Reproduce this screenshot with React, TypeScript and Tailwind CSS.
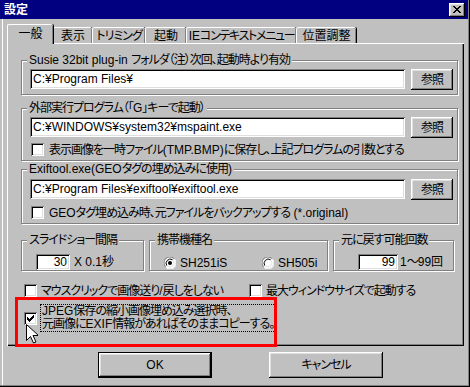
import type { ReactNode } from "react";

const raised =
  "shadow-[inset_-1px_-1px_#000,inset_1px_1px_#fff,inset_-2px_-2px_#808080,inset_2px_2px_#dfdfdf]";
const sunken =
  "shadow-[inset_1px_1px_#808080,inset_-1px_-1px_#fff,inset_2px_2px_#000,inset_-2px_-2px_#dfdfdf]";

// latin runs keep normal spacing, japanese runs get squeezed to the bitmap font's width
function T({ text }: { text: string }) {
  const parts = text.split(/([\x20-\x7e¥]+)/).filter((p) => p !== "");
  return (
    <>
      {parts.map((p, i) =>
        /^[\x20-\x7e¥]+$/.test(p) ? (
          <span key={i} className="tracking-[0px]">
            {p}
          </span>
        ) : (
          <span key={i}>{p}</span>
        )
      )}
    </>
  );
}

function Group({ label, className, children }: { label: string; className: string; children?: ReactNode }) {
  return (
    <div className={`relative border border-[#808080] shadow-[inset_1px_1px_#fff,1px_1px_#fff] ${className}`}>
      <span className="absolute left-[5px] top-[-8px] bg-[#c0c0c0] px-[2px] leading-[14px] whitespace-nowrap">
        <T text={label} />
      </span>
      {children}
    </div>
  );
}

function Field({ value, className }: { value: string; className: string }) {
  return (
    <div className={`bg-white ${sunken} px-[3px] leading-[20px] whitespace-nowrap overflow-hidden tracking-[0px] ${className}`}>
      {value}
    </div>
  );
}

function Button({ label, className }: { label: string; className: string }) {
  return (
    <div className={`flex items-center justify-center bg-[#c0c0c0] ${raised} ${className}`}>{label}</div>
  );
}

function CheckBox({ checked }: { checked?: boolean }) {
  return (
    <div className={`relative w-[13px] h-[13px] shrink-0 bg-white ${sunken}`}>
      {checked && (
        <svg className="absolute left-[3px] top-[3px]" width="7" height="7" viewBox="0 0 7 7">
          <path d="M0 2h1v1h1v1h1v-1h1v-1h1v-1h1v-1h1v3h-1v1h-1v1h-1v1h-1v1h-1v-1h-1v-1h-1z" fill="#000" />
        </svg>
      )}
    </div>
  );
}

function Radio({ checked }: { checked?: boolean }) {
  return (
    <svg width="12" height="12" viewBox="0 0 12 12" className="shrink-0">
      <circle cx="6" cy="6" r="5.5" fill="#fff" />
      <path d="M1.6 9.9A5.5 5.5 0 0 1 9.9 1.6" fill="none" stroke="#808080" strokeWidth="1" />
      <path d="M2.7 8.6A4.3 4.3 0 0 1 8.6 2.7" fill="none" stroke="#000" strokeWidth="1" />
      <path d="M10.4 2.1A5.5 5.5 0 0 1 2.1 10.4" fill="none" stroke="#fff" strokeWidth="1" />
      <path d="M9.3 3.4A4.3 4.3 0 0 1 3.4 9.3" fill="none" stroke="#dfdfdf" strokeWidth="1" />
      {checked && <circle cx="6" cy="6" r="2" fill="#000" />}
    </svg>
  );
}

function Tab({ label, selected, className }: { label: string; selected?: boolean; className: string }) {
  return (
    <div
      className={`flex items-center justify-center whitespace-nowrap bg-[#c0c0c0] rounded-t-[2px] border-l border-t border-white shadow-[inset_-1px_0_#808080,1px_0_#000] ${
        selected ? "relative z-10 h-[20px] -mb-[1px] pb-[2px]" : "h-[16px]"
      } ${className}`}
    >
      <T text={label} />
    </div>
  );
}

export default function App() {
  return (
    <div className="relative w-[470px] h-[387px] overflow-hidden bg-[#c0c0c0] text-[12px] tracking-[-1px] text-black font-['Liberation_Sans','Noto_Sans_CJK_JP',sans-serif] [font-feature-settings:'palt'] shadow-[inset_-1px_-1px_#000,inset_-2px_-2px_#808080,inset_2px_0_#c0c0c0,inset_3px_0_#fff]">
      {/* title bar */}
      <div className="flex items-center justify-between h-[19px] mr-[2px] bg-[#000080] pl-[4px] pr-[3px]">
        <span className="text-white font-bold leading-[14px] tracking-[0px]">設定</span>
        <div className={`relative w-[16px] h-[14px] bg-[#c0c0c0] ${raised}`}>
          <svg className="absolute left-[4px] top-[3px]" width="8" height="7" viewBox="0 0 8 7">
            <path d="M0 0h2v1h1v1h2v-1h1v-1h2v1h-1v1h-1v1h-1v1h1v1h1v1h1v1h-2v-1h-1v-1h-2v1h-1v1h-2v-1h1v-1h1v-1h1v-1h-1v-1h-1v-1h-1z" fill="#000" />
          </svg>
        </div>
      </div>

      {/* tabs */}
      <div className="flex items-end h-[19px] mt-[5px] pl-[7px]">
        <Tab label="一般" selected className="w-[46px] tracking-[0px]" />
        <Tab label="表示" className="w-[39px] tracking-[0px]" />
        <Tab label="トリミング" className="w-[53px] tracking-[-1px]" />
        <Tab label="起動" className="w-[41px] tracking-[0px]" />
        <Tab label="IEコンテキストメニュー" className="w-[110px] tracking-[-1.3px]" />
        <Tab label="位置調整" className="w-[60px] tracking-[0px]" />
      </div>

      {/* panel */}
      <div className="ml-[7px] w-[457px] h-[303px] border-l border-t border-white shadow-[inset_-1px_-1px_#000,inset_-2px_-2px_#808080] pl-[13px] pt-[16px]">
        <Group label="Susie 32bit plug-in フォルダ（注）次回、起動時より有効" className="w-[437px] h-[35px] pl-[8px] pt-[8px]">
          <div className="flex gap-[6px]">
            <Field value="C:¥Program Files¥" className="w-[375px] h-[20px]" />
            <Button label="参照" className="w-[42px] h-[21px]" />
          </div>
        </Group>

        <Group label="外部実行プログラム（「G」キーで起動）" className="mt-[13px] w-[437px] h-[53px] pl-[8px] pt-[8px]">
          <div className="flex gap-[6px]">
            <Field value="C:¥WINDOWS¥system32¥mspaint.exe" className="w-[375px] h-[20px]" />
            <Button label="参照" className="w-[42px] h-[21px]" />
          </div>
          <div className="flex items-center gap-[5px] mt-[5px] ml-[1px] h-[13px] whitespace-nowrap">
            <CheckBox />
            <span>
              <T text="表示画像を一時ファイル(TMP.BMP)に保存し、上記プログラムの引数とする" />
            </span>
          </div>
        </Group>

        <Group label="Exiftool.exe(GEOタグの埋め込みに使用)" className="mt-[8px] w-[437px] h-[55px] pl-[8px] pt-[9px]">
          <div className="flex gap-[6px]">
            <Field value="C:¥Program Files¥exiftool¥exiftool.exe" className="w-[375px] h-[20px]" />
            <Button label="参照" className="w-[42px] h-[21px]" />
          </div>
          <div className="flex items-center gap-[5px] mt-[6px] ml-[1px] h-[13px] whitespace-nowrap">
            <CheckBox />
            <span>
              <T text="GEOタグ埋め込み時、元ファイルをバックアップする (*.original)" />
            </span>
          </div>
        </Group>

        <div className="flex gap-[5px] mt-[16px]">
          <Group label="スライドショー間隔" className="w-[123px] h-[31px] pl-[14px] pt-[13px]">
            <div className="flex items-center gap-[4px]">
              <div className={`w-[34px] h-[16px] bg-white ${sunken} text-right pr-[3px] leading-[16px] tracking-[0px]`}>30</div>
              <span className="leading-[16px]">
                <T text="X 0.1秒" />
              </span>
            </div>
          </Group>
          <Group label="携帯機種名" className="w-[179px] h-[31px] pl-[14px] pt-[16px]">
            <div className="flex items-center h-[12px] tracking-[0px]">
              <Radio checked />
              <span className="ml-[4px] w-[82px]">SH251iS</span>
              <Radio />
              <span className="ml-[4px]">SH505i</span>
            </div>
          </Group>
          <Group label="元に戻す可能回数" className="w-[121px] h-[31px] pl-[24px] pt-[13px]">
            <div className="flex items-center gap-[2px]">
              <div className={`w-[40px] h-[16px] bg-white ${sunken} text-right pr-[3px] leading-[16px] tracking-[0px]`}>99</div>
              <span className="leading-[16px] whitespace-nowrap">
                <T text="1〜99回" />
              </span>
            </div>
          </Group>
        </div>

        <div className="flex items-center mt-[13px] h-[13px] ml-[3px] whitespace-nowrap">
          <CheckBox />
          <span className="ml-[4px] w-[208px]">
            <T text="マウスクリックで画像送り/戻しをしない" />
          </span>
          <CheckBox />
          <span className="ml-[4px]">最大ウィンドウサイズで起動する</span>
        </div>

        <div className="flex items-center mt-[7px] ml-[3px]">
          <CheckBox checked />
          <div className="ml-[3px] border border-dotted border-black px-[1px] leading-[13px] whitespace-nowrap">
            <div>
              <T text="JPEG保存の縮小画像埋め込み選択時、" />
            </div>
            <div>
              <T text="元画像にEXIF情報があればそのままコピーする。" />
            </div>
          </div>
        </div>
      </div>

      {/* dialog buttons */}
      <div className="flex gap-[57px] pl-[98px] mt-[6px]">
        <Button label="OK" className="w-[114px] h-[26px] border border-black tracking-[0px]" />
        <Button label="キャンセル" className="w-[114px] h-[26px]" />
      </div>

      {/* annotation overlay */}
      <div className="absolute left-[15px] top-[297px] w-[262px] h-[50px] border-[3px] border-[#ff0000]" />
      <svg className="absolute left-[26px] top-[324px]" width="12" height="20" viewBox="0 0 12 20">
        <path d="M0.5 0.5v16l4-4 3 6.5 2.5-1-3-6.5h5.5z" fill="#fff" stroke="#000" strokeWidth="1" />
      </svg>
    </div>
  );
}
